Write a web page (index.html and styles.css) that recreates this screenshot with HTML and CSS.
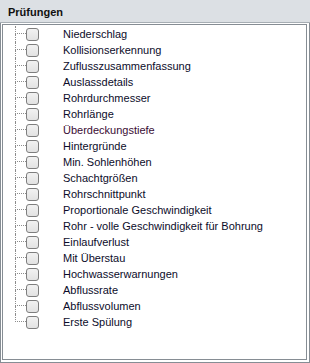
FILE: index.html
```html
<!DOCTYPE html>
<html lang="de">
<head>
  <meta charset="UTF-8">
  <title>Prüfungen</title>
  <link rel="stylesheet" href="styles.css">
</head>
<body>
  <div class="panel">
    <header class="panel-head">Prüfungen</header>
    <div class="panel-body">
      <ul class="tree">
        <li><span class="conn"><i></i><i></i></span><span class="check"></span><span class="label">Niederschlag</span></li>
        <li><span class="conn"><i></i><i></i></span><span class="check"></span><span class="label">Kollisionserkennung</span></li>
        <li><span class="conn"><i></i><i></i></span><span class="check"></span><span class="label">Zuflusszusammenfassung</span></li>
        <li><span class="conn"><i></i><i></i></span><span class="check"></span><span class="label">Auslassdetails</span></li>
        <li><span class="conn"><i></i><i></i></span><span class="check"></span><span class="label">Rohrdurchmesser</span></li>
        <li><span class="conn"><i></i><i></i></span><span class="check"></span><span class="label">Rohrlänge</span></li>
        <li><span class="conn"><i></i><i></i></span><span class="check"></span><span class="label alt">Überdeckungstiefe</span></li>
        <li><span class="conn"><i></i><i></i></span><span class="check"></span><span class="label">Hintergründe</span></li>
        <li><span class="conn"><i></i><i></i></span><span class="check"></span><span class="label">Min. Sohlenhöhen</span></li>
        <li><span class="conn"><i></i><i></i></span><span class="check"></span><span class="label">Schachtgrößen</span></li>
        <li><span class="conn"><i></i><i></i></span><span class="check"></span><span class="label">Rohrschnittpunkt</span></li>
        <li><span class="conn"><i></i><i></i></span><span class="check"></span><span class="label">Proportionale Geschwindigkeit</span></li>
        <li><span class="conn"><i></i><i></i></span><span class="check"></span><span class="label">Rohr - volle Geschwindigkeit für Bohrung</span></li>
        <li><span class="conn"><i></i><i></i></span><span class="check"></span><span class="label">Einlaufverlust</span></li>
        <li><span class="conn"><i></i><i></i></span><span class="check"></span><span class="label">Mit Überstau</span></li>
        <li><span class="conn"><i></i><i></i></span><span class="check"></span><span class="label">Hochwasserwarnungen</span></li>
        <li><span class="conn"><i></i><i></i></span><span class="check"></span><span class="label">Abflussrate</span></li>
        <li><span class="conn"><i></i><i></i></span><span class="check"></span><span class="label">Abflussvolumen</span></li>
        <li class="last"><span class="conn"><i></i><i></i></span><span class="check"></span><span class="label">Erste Spülung</span></li>
      </ul>
    </div>
  </div>
</body>
</html>
```

FILE: styles.css
```css
body {
  margin: 0;
  padding: 0;
  background-color: #ffffff;
  font-family: 'Liberation Sans', Arial, sans-serif;
}
.panel {
  width: 310px;
  height: 363px;
  display: flex;
  flex-direction: column;
}
.panel-head {
  height: 23px;
  box-sizing: border-box;
  padding: 6px 0 0 8px;
  background-color: #dce0e4;
  border-bottom: 1px solid #a7aeb4;
  font-size: 11px;
  font-weight: bold;
  line-height: 13px;
  color: #111111;
}
.panel-body {
  flex: 1;
  padding: 1px 2px 2px 1px;
  border: 1px solid #868d94;
  border-top: none;
  display: flex;
}
.tree {
  flex: 1;
  list-style: none;
  margin: 0;
  padding: 1px 0 0 12px;
  border: 1px solid #868d94;
}
.tree li {
  display: flex;
  align-items: center;
  height: 16px;
}
.conn {
  display: flex;
  flex-direction: column;
  width: 11px;
  height: 16px;
  box-sizing: border-box;
}
.conn i {
  display: block;
  height: 8px;
  box-sizing: border-box;
  border-left: 1px dotted #8c8c8c;
}
.conn i:first-child {
  border-bottom: 1px dotted #8c8c8c;
}
.last .conn i:last-child {
  border-left: none;
}
.check {
  width: 13px;
  height: 13px;
  box-sizing: border-box;
  border: 1px solid #7e7e7e;
  border-radius: 3px;
  background: linear-gradient(#f2f2f2, #e2e2e2);
}
.label {
  margin-left: 24px;
  font-size: 11px;
  color: #0c0c2a;
  white-space: nowrap;
}
.label.alt {
  color: #3a0c34;
}
```
